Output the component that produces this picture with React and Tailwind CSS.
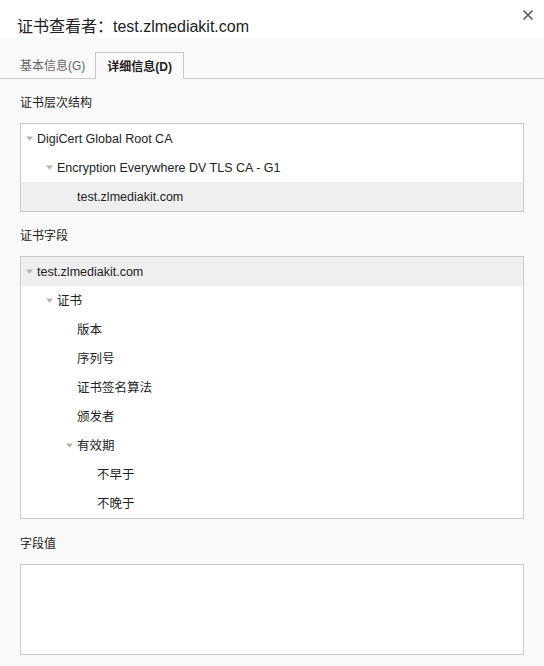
import React from "react";

const font = { fontFamily: '"Liberation Sans", "Noto Sans CJK SC", sans-serif' };

function Tri() {
  return (
    <svg width="7" height="5" viewBox="0 0 7 5" className="shrink-0">
      <path d="M0 0.5 L7 0.5 L3.5 4.8 Z" fill="#b4b4b4" />
    </svg>
  );
}

function Row({ level, open, selected, children }) {
  const pads = ["pl-[5px]", "pl-[25px]", "pl-[45px]", "pl-[65px]"];
  return (
    <div className={`h-[29px] flex items-center ${pads[level]} ${selected ? "bg-[#efefef]" : ""}`}>
      <div className="w-[11px] flex items-center">{open ? <Tri /> : null}</div>
      <span className="pt-[2px] text-[12.5px] text-[#222] whitespace-nowrap">{children}</span>
    </div>
  );
}

export default function App() {
  return (
    <div className="w-[544px] h-[666px] bg-[#f9f9f9] flex flex-col" style={font}>
      <div className="h-[38px] bg-white flex items-start justify-between">
        <div className="pl-[17px] pt-[17px] text-[16px] leading-[20px] text-[#222]">证书查看者：test.zlmediakit.com</div>
        <div className="pr-[10px] pt-[9px]">
          <svg width="12" height="12" viewBox="0 0 12 12">
            <path d="M1.5 1.5 L10.5 10.5 M10.5 1.5 L1.5 10.5" stroke="#555" strokeWidth="1.6" />
          </svg>
        </div>
      </div>
      <div className="h-[41px] flex items-end border-b border-[#c8c8c8] pl-[10px]">
        <div className="h-[24px] px-[10px] flex items-center text-[12px] text-[#666]">基本信息(G)</div>
        <div className="h-[27px] -mb-px px-[11px] pt-[2px] flex items-center text-[12px] font-bold text-[#222] border border-b-0 border-[#c8c8c8] bg-[#f9f9f9]">详细信息(D)</div>
      </div>
      <div className="px-[20px] flex flex-col">
        <div className="h-[44px] pt-[4px] flex items-center text-[12px] text-[#222]">证书层次结构</div>
        <div className="border border-[#c8c8c8] bg-white">
          <Row level={0} open>DigiCert Global Root CA</Row>
          <Row level={1} open>Encryption Everywhere DV TLS CA - G1</Row>
          <Row level={2} selected>test.zlmediakit.com</Row>
        </div>
        <div className="h-[44px] pt-[4px] flex items-center text-[12px] text-[#222]">证书字段</div>
        <div className="border border-[#c8c8c8] bg-white">
          <Row level={0} open selected>test.zlmediakit.com</Row>
          <Row level={1} open>证书</Row>
          <Row level={2}>版本</Row>
          <Row level={2}>序列号</Row>
          <Row level={2}>证书签名算法</Row>
          <Row level={2}>颁发者</Row>
          <Row level={2} open>有效期</Row>
          <Row level={3}>不早于</Row>
          <Row level={3}>不晚于</Row>
        </div>
        <div className="h-[45px] pt-[4px] flex items-center text-[12px] text-[#222]">字段值</div>
        <div className="h-[91px] border border-[#c8c8c8] bg-white"></div>
      </div>
    </div>
  );
}
